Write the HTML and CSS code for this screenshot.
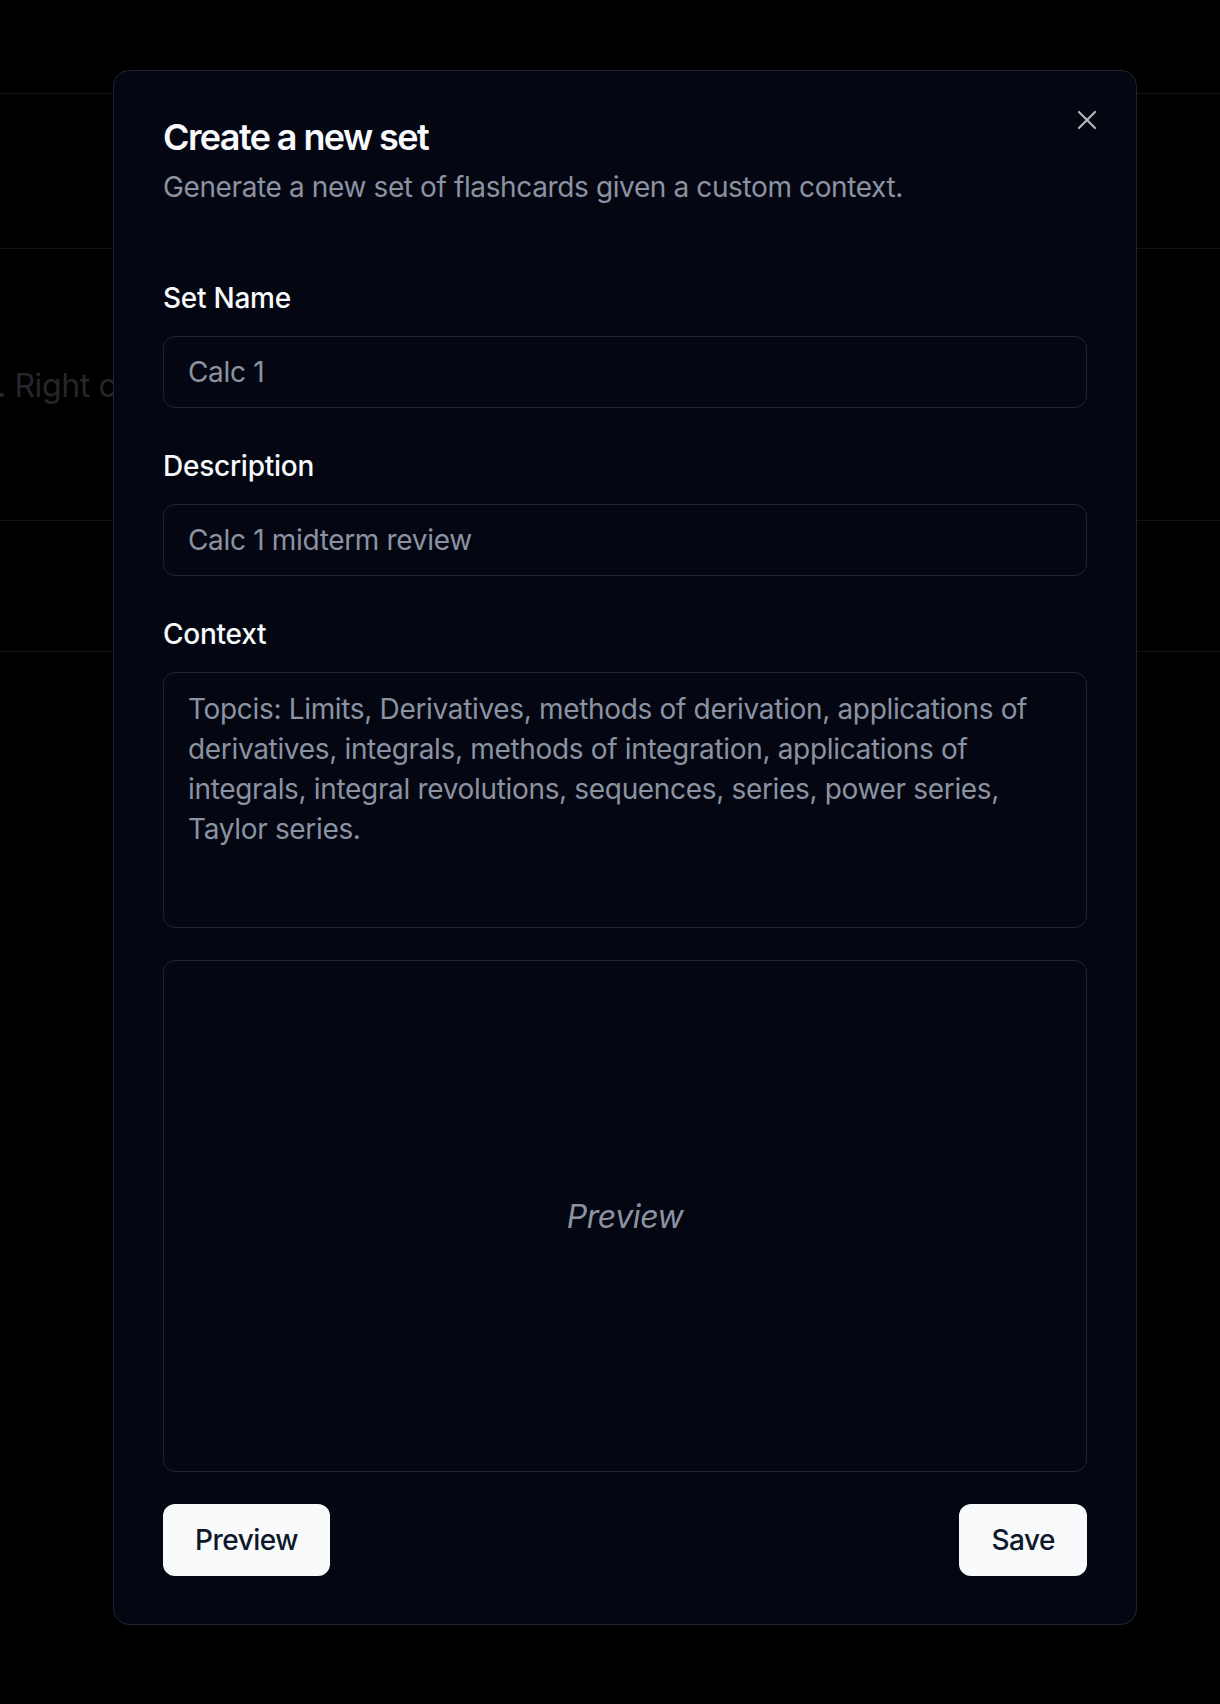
FILE: index.html
```html
<!DOCTYPE html>
<html lang="en">
<head>
<meta charset="utf-8">
<title>Create a new set</title>
<link rel="stylesheet" href="styles.css">
</head>
<body>
<div class="page">
  <div class="row row-head"></div>
  <div class="row row-a"></div>
  <div class="row row-b"><p class="bg-text">. Right click a set to edit or delete it.</p></div>
  <div class="row row-c"></div>
</div>

<div class="dialog" role="dialog" aria-labelledby="dlg-title">
  <button class="close" type="button" aria-label="Close">
    <svg width="32" height="32" viewBox="0 0 24 24" fill="none" stroke="currentColor" stroke-width="1.6" stroke-linecap="round" stroke-linejoin="round"><path d="M18 6 6 18"/><path d="m6 6 12 12"/></svg>
  </button>
  <div class="header">
    <h2 class="title" id="dlg-title">Create a new set</h2>
    <p class="desc">Generate a new set of flashcards given a custom context.</p>
  </div>
  <form class="form">
    <div class="fields">
      <div class="field">
        <label class="label" for="name">Set Name</label>
        <input class="input" id="name" type="text" placeholder="Calc 1">
      </div>
      <div class="field">
        <label class="label" for="description">Description</label>
        <input class="input" id="description" type="text" placeholder="Calc 1 midterm review">
      </div>
      <div class="field">
        <label class="label" for="context">Context</label>
        <textarea class="textarea" id="context" placeholder="Topcis: Limits, Derivatives, methods of derivation, applications of derivatives, integrals, methods of integration, applications of integrals, integral revolutions, sequences, series, power series, Taylor series."></textarea>
      </div>
    </div>
    <div class="preview"><span class="preview-text">Preview</span></div>
    <div class="actions">
      <button class="btn" type="button">Preview</button>
      <button class="btn" type="submit">Save</button>
    </div>
  </form>
</div>
</body>
</html>
```

FILE: styles.css
```css
* { box-sizing: border-box; }

html, body {
  margin: 0;
  padding: 0;
  background: #000;
  font-family: Inter, "Noto Sans", "Liberation Sans", sans-serif;
}

body {
  position: relative;
  min-height: 1704px;
  overflow: hidden;
}

.page {
  display: flex;
  flex-direction: column;
}
.row {
  border-bottom: 1px solid #121317;
}
.row-head { height: 94px; }
.row-a { height: 155px; }
.row-b { height: 272px; }
.row-c { height: 131px; }

.bg-text {
  margin: 113px 0 0 -3px;
  font-size: 32px;
  line-height: 48px;
  letter-spacing: -0.4px;
  color: #25262a;
  white-space: nowrap;
}

/* dialog */
.dialog {
  position: absolute;
  left: 113px;
  top: 70px;
  width: 1024px;
  background: #040712;
  border: 1px solid #1e2532;
  border-radius: 16px;
  padding: 48px 49px 48px 49px;
}

.close {
  position: absolute;
  top: 33px;
  right: 33px;
  width: 32px;
  height: 32px;
  padding: 0;
  border: none;
  background: transparent;
  color: #f8fafc;
  opacity: 0.72;
  display: flex;
  align-items: center;
  justify-content: center;
}
.close svg { display: block; }

.header {
  display: flex;
  flex-direction: column;
  gap: 12px;
}
.title {
  margin: 0;
  font-size: 36px;
  line-height: 36px;
  font-weight: 600;
  letter-spacing: -1.6px;
  color: #f8fafc;
}
.desc {
  margin: 0;
  font-size: 28px;
  line-height: 40px;
  letter-spacing: -0.38px;
  color: #8b93a2;
}

.form {
  margin-top: 77px;
  display: flex;
  flex-direction: column;
}
.fields {
  display: flex;
  flex-direction: column;
  gap: 44px;
}
.field {
  display: flex;
  flex-direction: column;
  gap: 24px;
}
.label {
  font-size: 28px;
  line-height: 28px;
  font-weight: 500;
  letter-spacing: -0.25px;
  color: #f8fafc;
}
.input,
.textarea {
  width: 100%;
  background: transparent;
  border: 1px solid #1e2532;
  border-radius: 12px;
  font-family: inherit;
  font-size: 28px;
  letter-spacing: -0.33px;
  color: #f8fafc;
  outline: none;
}
.input {
  height: 72px;
  padding: 0 24px;
}
.textarea {
  height: 256px;
  padding: 16px 24px;
  line-height: 40px;
  resize: none;
  display: block;
}
.input::placeholder,
.textarea::placeholder {
  color: #8b93a2;
  opacity: 1;
}

.preview {
  margin-top: 32px;
  height: 512px;
  border: 1px solid #1e2532;
  border-radius: 12px;
  display: flex;
  align-items: center;
  justify-content: center;
}
.preview-text {
  font-size: 32px;
  font-style: italic;
  letter-spacing: -0.4px;
  color: #8b93a2;
}

.actions {
  margin-top: 32px;
  display: flex;
  justify-content: space-between;
}
.btn {
  height: 72px;
  padding: 0 32px;
  border: none;
  border-radius: 12px;
  background: #f8fafc;
  color: #0f172a;
  font-family: inherit;
  font-size: 28px;
  font-weight: 500;
  letter-spacing: -0.5px;
}
```
